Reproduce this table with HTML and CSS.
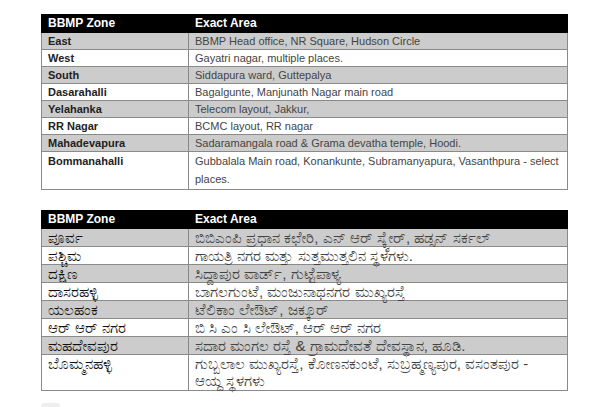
FILE: index.html
```html
<!DOCTYPE html>
<html lang="en">
<head>
<meta charset="utf-8">
<title>BBMP Zones</title>
<link rel="stylesheet" href="styles.css">
</head>
<body>
<div class="page">
  <table class="zones">
    <thead>
      <tr><th class="c1">BBMP Zone</th><th>Exact Area</th></tr>
    </thead>
    <tbody>
      <tr class="alt"><td class="zone">East</td><td>BBMP Head office, NR Square, Hudson Circle</td></tr>
      <tr><td class="zone">West</td><td>Gayatri nagar, multiple places.</td></tr>
      <tr class="alt"><td class="zone">South</td><td>Siddapura ward, Guttepalya</td></tr>
      <tr><td class="zone">Dasarahalli</td><td>Bagalgunte, Manjunath Nagar main road</td></tr>
      <tr class="alt"><td class="zone">Yelahanka</td><td>Telecom layout, Jakkur,</td></tr>
      <tr><td class="zone">RR Nagar</td><td>BCMC layout, RR nagar</td></tr>
      <tr class="alt"><td class="zone">Mahadevapura</td><td>Sadaramangala road &amp; Grama devatha temple, Hoodi.</td></tr>
      <tr class="tall"><td class="zone">Bommanahalli</td><td>Gubbalala Main road, Konankunte, Subramanyapura, Vasanthpura - select places.</td></tr>
    </tbody>
  </table>

  <table class="zones kn">
    <thead>
      <tr><th class="c1">BBMP Zone</th><th>Exact Area</th></tr>
    </thead>
    <tbody>
      <tr class="alt"><td class="zone">ಪೂರ್ವ</td><td>ಬಿಬಿಎಂಪಿ ಪ್ರಧಾನ ಕಛೇರಿ, ಎನ್ ಆರ್ ಸ್ಕ್ವೇರ್, ಹಡ್ಸನ್ ಸರ್ಕಲ್</td></tr>
      <tr><td class="zone">ಪಶ್ಚಿಮ</td><td>ಗಾಯತ್ರಿ ನಗರ ಮತ್ತು ಸುತ್ತಮುತ್ತಲಿನ ಸ್ಥಳಗಳು.</td></tr>
      <tr class="alt"><td class="zone">ದಕ್ಷಿಣ</td><td>ಸಿದ್ದಾಪುರ ವಾರ್ಡ್, ಗುಟ್ಟೆಪಾಳ್ಯ</td></tr>
      <tr><td class="zone">ದಾಸರಹಳ್ಳಿ</td><td>ಬಾಗಲಗುಂಟೆ, ಮಂಜುನಾಥನಗರ ಮುಖ್ಯರಸ್ತೆ</td></tr>
      <tr class="alt"><td class="zone">ಯಲಹಂಕ</td><td>ಟೆಲಿಕಾಂ ಲೇಔಟ್, ಜಕ್ಕೂರ್</td></tr>
      <tr><td class="zone">ಆರ್ ಆರ್ ನಗರ</td><td>ಬಿ ಸಿ ಎಂ ಸಿ ಲೇಔಟ್, ಆರ್ ಆರ್ ನಗರ</td></tr>
      <tr class="alt"><td class="zone">ಮಹದೇವಪುರ</td><td>ಸದಾರ ಮಂಗಲ ರಸ್ತೆ &amp; ಗ್ರಾಮದೇವತೆ ದೇವಸ್ಥಾನ, ಹೂಡಿ.</td></tr>
      <tr class="tall"><td class="zone">ಬೊಮ್ಮನಹಳ್ಳಿ</td><td>ಗುಬ್ಬಲಾಲ ಮುಖ್ಯರಸ್ತೆ, ಕೋಣನಕುಂಟೆ, ಸುಬ್ರಹ್ಮಣ್ಯಪುರ, ವಸಂತಪುರ - <span class="nw">ಆಯ್ದ ಸ್ಥಳಗಳು</span></td></tr>
    </tbody>
  </table>

  <div class="more"><span class="dot"></span><span class="dot"></span><span class="dot"></span></div>
</div>
</body>
</html>
```

FILE: styles.css
```css
html, body {
  margin: 0;
  padding: 0;
  background: #ffffff;
}

.page {
  padding: 14px 0 0 41px;
  font-family: "Liberation Sans", Arial, sans-serif;
  font-size: 11px;
  color: #333333;
}

.zones {
  width: 527px;
  border-collapse: collapse;
  table-layout: fixed;
  margin-bottom: 20px;
}

.zones th {
  background: #000000;
  color: #ffffff;
  font-size: 12px;
  font-weight: bold;
  text-align: left;
  line-height: 17px;
  padding: 0 6px;
  border: 1px solid #000000;
}

.zones th.c1 {
  width: 134px;
}

.zones td {
  line-height: 16px;
  padding: 0 6px;
  border: 1px solid #8a8a8a;
  vertical-align: top;
  color: #444444;
}

.zones td.zone {
  font-weight: bold;
  color: #222222;
}

.zones tr.alt td {
  background: #cccccc;
}

.zones tr.tall td {
  line-height: 18px;
  padding-bottom: 1px;
}

.kn td {
  font-size: 15px;
  line-height: 17px;
}

.kn td.zone {
  font-weight: normal;
  color: #111111;
}

.kn tr.tall td {
  line-height: 17px;
  padding-bottom: 1px;
}

.nw {
  white-space: nowrap;
}

.more {
  display: flex;
  gap: 2px;
  align-items: center;
  justify-content: center;
  width: 19px;
  height: 10px;
  margin-top: -8px;
  background: #eeeeee;
  border-radius: 3px;
}

.more .dot {
  width: 2px;
  height: 2px;
  border-radius: 1px;
  background: #777777;
}
```
